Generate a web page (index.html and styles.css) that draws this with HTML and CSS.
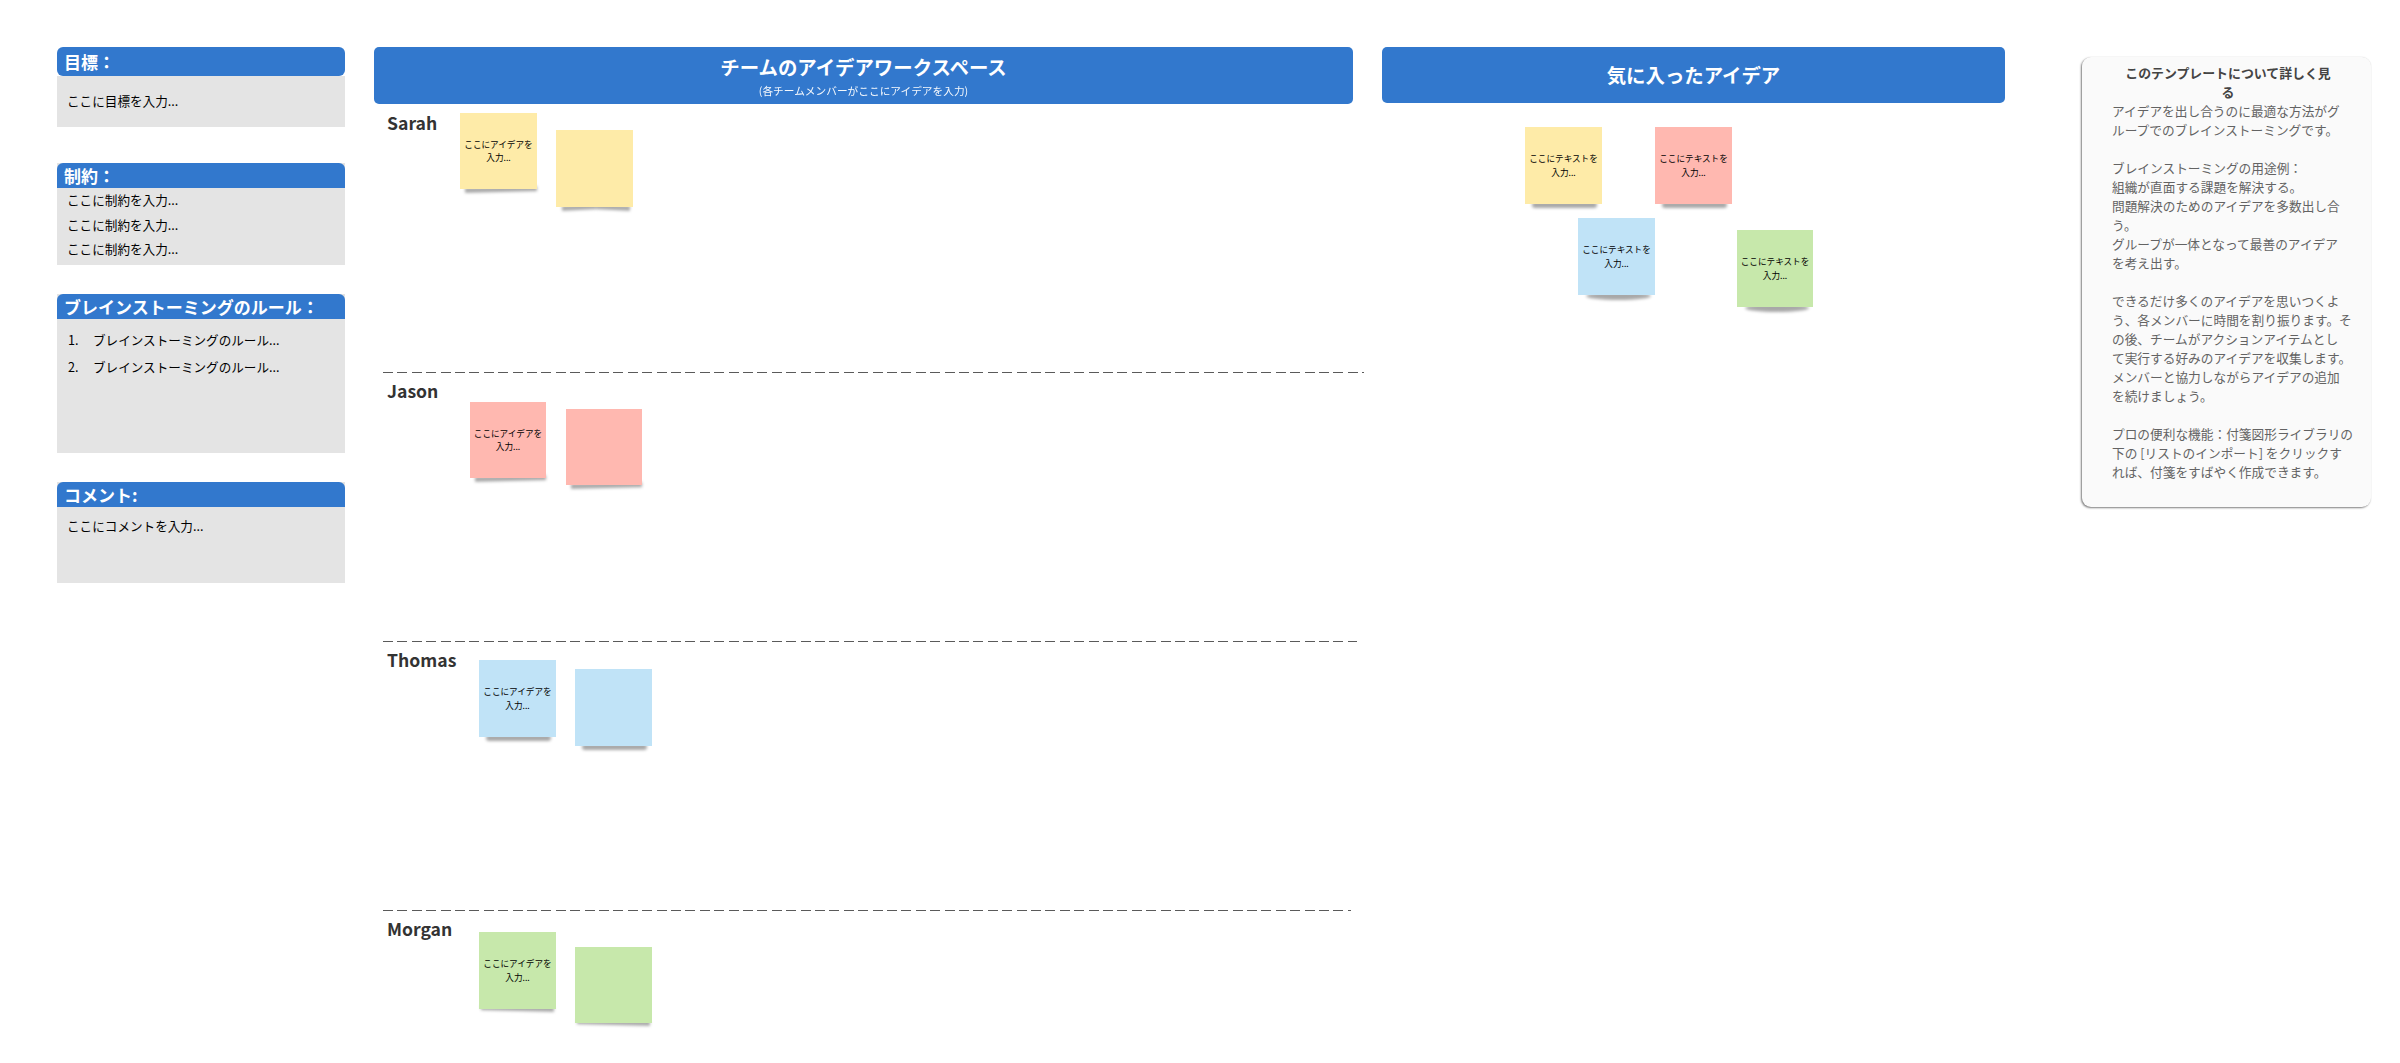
FILE: index.html
```html
<!DOCTYPE html>
<html lang="ja">
<head>
<meta charset="utf-8">
<title>チームのアイデアワークスペース</title>
<link rel="stylesheet" href="styles.css">
</head>
<body>
<div class="board">
  <aside class="side">
    <section class="panel panel-goal">
      <h2 class="panel-head">目標：</h2>
      <div class="panel-body"><p>ここに目標を入力...</p></div>
    </section>
    <section class="panel panel-limits">
      <h2 class="panel-head">制約：</h2>
      <div class="panel-body">
        <p>ここに制約を入力...</p>
        <p>ここに制約を入力...</p>
        <p>ここに制約を入力...</p>
      </div>
    </section>
    <section class="panel panel-rules">
      <h2 class="panel-head">ブレインストーミングのルール：</h2>
      <div class="panel-body">
        <ol class="rules">
          <li>ブレインストーミングのルール...</li>
          <li>ブレインストーミングのルール...</li>
        </ol>
      </div>
    </section>
    <section class="panel panel-notes">
      <h2 class="panel-head">コメント:</h2>
      <div class="panel-body"><p>ここにコメントを入力...</p></div>
    </section>
  </aside>

  <main class="workspace">
    <header class="banner banner-main">
      <h1 class="banner-title">チームのアイデアワークスペース</h1>
      <p class="banner-sub">(各チームメンバーがここにアイデアを入力)</p>
    </header>
    <section class="lane lane-first">
      <h3 class="lane-name">Sarah</h3>
      <div class="sticky yellow s-sarah-1 shadow-tilt-left">ここにアイデアを<br>入力...</div>
      <div class="sticky yellow s-sarah-2 shadow-curl"></div>
    </section>
    <div class="divider divider-1"></div>
    <section class="lane">
      <h3 class="lane-name">Jason</h3>
      <div class="sticky red s-jason-1 shadow-tilt-left">ここにアイデアを<br>入力...</div>
      <div class="sticky red s-jason-2 shadow-tilt-left"></div>
    </section>
    <div class="divider divider-2"></div>
    <section class="lane">
      <h3 class="lane-name">Thomas</h3>
      <div class="sticky blue s-thomas-1 shadow-flat">ここにアイデアを<br>入力...</div>
      <div class="sticky blue s-thomas-2 shadow-flat"></div>
    </section>
    <div class="divider divider-3"></div>
    <section class="lane lane-last">
      <h3 class="lane-name">Morgan</h3>
      <div class="sticky green s-morgan-1 shadow-tilt-right">ここにアイデアを<br>入力...</div>
      <div class="sticky green s-morgan-2 shadow-tilt-right"></div>
    </section>
  </main>

  <section class="favorites">
    <header class="banner banner-fav">
      <h1 class="banner-title">気に入ったアイデア</h1>
    </header>
    <div class="fav-canvas">
      <div class="sticky yellow s-fav-1 shadow-flat">ここにテキストを<br>入力...</div>
      <div class="sticky red s-fav-2 shadow-flat">ここにテキストを<br>入力...</div>
      <div class="sticky blue s-fav-3 shadow-belly">ここにテキストを<br>入力...</div>
      <div class="sticky green s-fav-4 shadow-belly">ここにテキストを<br>入力...</div>
    </div>
  </section>

  <aside class="info">
    <h2 class="info-title">このテンプレートについて詳しく見<br>る</h2>
    <p>アイデアを出し合うのに最適な方法がグ<br>ループでのブレインストーミングです。</p>
    <p>ブレインストーミングの用途例：<br>組織が直面する課題を解決する。<br>問題解決のためのアイデアを多数出し合<br>う。<br>グループが一体となって最善のアイデア<br>を考え出す。</p>
    <p>できるだけ多くのアイデアを思いつくよ<br>う、各メンバーに時間を割り振ります。そ<br>の後、チームがアクションアイテムとし<br>て実行する好みのアイデアを収集します。<br>メンバーと協力しながらアイデアの追加<br>を続けましょう。</p>
    <p>プロの便利な機能：付箋図形ライブラリの<br>下の [リストのインポート] をクリックす<br>れば、付箋をすばやく作成できます。</p>
  </aside>
</div>
</body>
</html>
```
FILE: styles.css
```css
* { box-sizing: border-box; }
html, body { margin: 0; padding: 0; background: #fff; }
body {
  width: 2400px;
  height: 1063px;
  overflow: hidden;
  font-family: "Noto Sans CJK JP", "Noto Sans", sans-serif;
}
h1, h2, h3, p, ol { margin: 0; padding: 0; }

.board { display: flex; align-items: flex-start; height: 1063px; padding: 47px 0 0 57px; }

/* left column */
.side { display: flex; flex-direction: column; width: 288px; flex: none; }
.panel { background: #e4e4e4; color: #000; font-size: 12.6px; line-height: 24.5px; }
.panel-head {
  height: 25px;
  padding-left: 7px;
  margin: 0;
  background: #3278cd;
  color: #fff;
  font-size: 17px;
  font-weight: 700;
  line-height: 26px;
  border-radius: 6px 6px 0 0;
  white-space: nowrap;
}
.panel-goal { height: 80px; background: none; }
.panel-goal .panel-head { height: 29px; line-height: 30px; border-radius: 6px; }
.panel-goal .panel-body { height: 51px; background: #e4e4e4; padding: 13px 10px 0; }
.panel-limits { height: 102px; margin-top: 36px; }
.panel-limits .panel-body { padding: 0 10px; }
.panel-rules { height: 159px; margin-top: 29px; }
.panel-rules .panel-body { padding: 8px 10px 0; }
.panel-notes { height: 101px; margin-top: 29px; }
.panel-notes .panel-body { padding: 7px 10px 0; }

.rules { list-style: none; counter-reset: rule; line-height: 26.5px; }
.rules li { counter-increment: rule; display: flex; }
.rules li::before { content: counter(rule) "."; width: 25px; flex: none; padding-left: 1px; }

/* banners */
.banner {
  display: flex;
  flex-direction: column;
  align-items: center;
  background: #3278cd;
  color: #fff;
  border-radius: 5px;
}
.banner-title { font-size: 19.4px; font-weight: 700; line-height: 24px; }
.banner-sub { font-size: 10.7px; line-height: 14px; margin-top: 5px; opacity: .95; }
.banner-main { height: 57px; padding-top: 8px; }
.banner-fav { height: 56px; padding-top: 16px; }

/* team workspace */
.workspace { width: 979px; margin-left: 29px; flex: none; }
.lane { position: relative; isolation: isolate; height: 268px; padding: 5px 0 0 13px; }
.lane-first { height: 268px; padding-top: 6px; }
.lane-last { height: 152px; }
.lane-name { font-size: 17.6px; font-weight: 700; line-height: 26px; color: #333; }

.divider {
  height: 1px;
  margin-left: 9px;
  background: repeating-linear-gradient(90deg, #5a5a5a 0 10px, transparent 10px 14.4px);
}
.divider-1 { width: 981px; }
.divider-2 { width: 974px; }
.divider-3 { width: 968px; }

/* favourites */
.favorites { width: 623px; margin-left: 29px; flex: none; }
.fav-canvas { position: relative; isolation: isolate; height: 400px; }

/* sticky notes sit on a free canvas */
.sticky {
  position: absolute;
  width: 77px;
  height: 77px;
  display: flex;
  align-items: center;
  justify-content: center;
  text-align: center;
  font-size: 8.6px;
  line-height: 13.4px;
  color: #000;
}
.yellow { background: #feeba8; }
.red { background: #ffb8b0; }
.blue { background: #c0e3f7; }
.green { background: #c7e8ab; }

.sticky::after {
  content: "";
  position: absolute;
  z-index: -1;
  background: rgba(0, 0, 0, .34);
  filter: blur(1.5px);
}
.shadow-tilt-left::after { left: 5px; right: 0; bottom: -3px; height: 5px; transform: rotate(-1.4deg); }
.shadow-tilt-right::after { left: 2px; right: 2px; bottom: -2px; height: 5px; transform: rotate(1.4deg); }
.shadow-flat::after { left: 7px; right: 5px; bottom: -4px; height: 6px; border-radius: 3px; }
.shadow-belly::after { left: 8px; right: 4px; bottom: -5px; height: 8px; border-radius: 50%; }
.shadow-curl::after { left: 6px; width: 34px; bottom: -3px; height: 5px; transform: rotate(-3deg); }
.shadow-curl::before {
  content: "";
  position: absolute;
  z-index: -1;
  right: 3px;
  width: 34px;
  bottom: -3px;
  height: 5px;
  background: rgba(0, 0, 0, .34);
  filter: blur(1.5px);
  transform: rotate(3deg);
}

.s-sarah-1 { left: 86px; top: 9px; height: 76px; }
.s-sarah-2 { left: 182px; top: 26px; }
.s-jason-1 { left: 96px; top: 29px; width: 76px; height: 76px; }
.s-jason-2 { left: 192px; top: 36px; width: 76px; height: 76px; }
.s-thomas-1 { left: 105px; top: 18px; }
.s-thomas-2 { left: 201px; top: 27px; }
.s-morgan-1 { left: 105px; top: 21px; }
.s-morgan-2 { left: 201px; top: 36px; height: 76px; }
.s-fav-1 { left: 143px; top: 24px; }
.s-fav-2 { left: 273px; top: 24px; }
.s-fav-3 { left: 196px; top: 115px; }
.s-fav-4 { left: 355px; top: 127px; width: 76px; }

/* info card */
.info {
  width: 289px;
  height: 450px;
  flex: none;
  margin: 10px 0 0 77px;
  padding: 6px 15px 0 30px;
  background: #fafafa;
  border-radius: 9px;
  color: #636363;
  font-size: 12.7px;
  line-height: 19px;
  box-shadow: -1px 1px 2px rgba(0, 0, 0, .5), 0 0 1px rgba(0, 0, 0, .1);
  white-space: nowrap;
}
.info-title { font-size: 12.9px; font-weight: 700; color: #444; text-align: center; margin-right: 12px; line-height: 19px; }
.info p { margin-bottom: 19px; }
```
